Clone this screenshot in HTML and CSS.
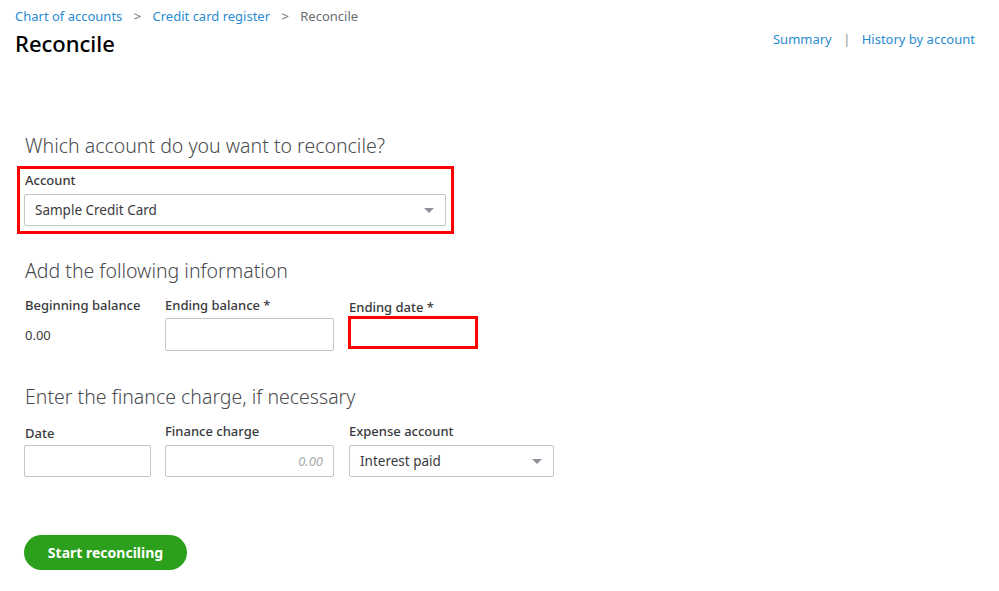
FILE: index.html
```html
<!DOCTYPE html>
<html lang="en">
  <head>
    <meta charset="UTF-8" />
    <title>Reconcile</title>
    <link rel="stylesheet" href="styles.css">
  </head>
  <body>
    <div class="page-header">
      <div class="header-left">
        <div class="breadcrumb">
          <a href="#">Chart of accounts</a>
          <span class="sep">&gt;</span>
          <a href="#">Credit card register</a>
          <span class="sep">&gt;</span>
          <span class="current">Reconcile</span>
        </div>
        <h1>Reconcile</h1>
      </div>
      <div class="header-links">
        <a href="#">Summary</a>
        <span class="bar">|</span>
        <a href="#">History by account</a>
      </div>
    </div>

    <div class="form">
      <h2>Which account do you want to reconcile?</h2>
      <div class="highlight account-box">
        <label class="field-label">Account</label>
        <div class="select wide">
          <span>Sample Credit Card</span>
          <span class="caret"></span>
        </div>
      </div>

      <h2 class="section">Add the following information</h2>
      <div class="row">
        <div class="col col-1">
          <label class="field-label">Beginning balance</label>
          <div class="static-value">0.00</div>
        </div>
        <div class="col col-2">
          <label class="field-label">Ending balance *</label>
          <div class="input"></div>
        </div>
        <div class="col col-3 ending-date">
          <label class="field-label">Ending date *</label>
          <div class="input highlight-input"></div>
        </div>
      </div>

      <h2 class="section finance">Enter the finance charge, if necessary</h2>
      <div class="row">
        <div class="col col-1">
          <label class="field-label low">Date</label>
          <div class="input date-input"></div>
        </div>
        <div class="col col-2">
          <label class="field-label">Finance charge</label>
          <div class="input amount"><span>0.00</span></div>
        </div>
        <div class="col col-3">
          <label class="field-label">Expense account</label>
          <div class="select expense">
            <span>Interest paid</span>
            <span class="caret"></span>
          </div>
        </div>
      </div>

      <button class="btn-primary">Start reconciling</button>
    </div>
  </body>
</html>
```

FILE: styles.css
```css
body {
  margin: 0;
  font-family: "Noto Sans", "Open Sans", sans-serif;
  color: #393a3d;
  background: #fff;
}

a {
  color: #2a8bd2;
  text-decoration: none;
}

.page-header {
  display: flex;
  justify-content: space-between;
  padding: 0 24px 0 15px;
}

.breadcrumb {
  margin-top: 7px;
  font-size: 13px;
  line-height: 18px;
}

.breadcrumb .sep {
  color: #6b6c72;
  margin: 0 8px;
}

.breadcrumb .current {
  color: #6b6c72;
}

h1 {
  margin: 3px 0 0;
  font-size: 22px;
  font-weight: 500;
  line-height: 30px;
  color: #000;
}

.header-links {
  margin-top: 30px;
  font-size: 13px;
  line-height: 18px;
}

.header-links .bar {
  color: #8d9096;
  margin: 0 8px;
}

.form {
  padding: 0 25px;
  margin-top: 75px;
}

h2 {
  margin: 0;
  font-size: 19.5px;
  font-weight: 300;
  line-height: 26px;
  color: #4a4b4f;
}

.highlight {
  border: 3px solid #f00;
}

.account-box {
  width: 422px;
  margin: 7px 0 0 -8px;
  padding: 2px 5px 5px 4px;
}

.field-label {
  display: block;
  font-size: 13px;
  line-height: 18px;
  font-weight: 500;
  color: #393a3d;
}

.account-box .field-label {
  margin-left: 1px;
  margin-bottom: 5px;
}

.select {
  display: flex;
  align-items: center;
  justify-content: space-between;
  box-sizing: border-box;
  height: 32px;
  border: 1px solid #c4c4c4;
  border-radius: 2px;
  padding: 0 10px;
  font-size: 13.5px;
  color: #393a3d;
}

.select.wide {
  width: 422px;
}

.caret {
  width: 0;
  height: 0;
  border-left: 5px solid transparent;
  border-right: 5px solid transparent;
  border-top: 5px solid #8d9096;
  margin-right: 1px;
}

.section {
  margin-top: 24px;
}

.row {
  display: flex;
  gap: 15px;
  margin-top: 12px;
}

.col-1 {
  width: 125px;
}

.col-2 {
  width: 169px;
}

.col-3 {
  width: 205px;
}

.static-value {
  margin-top: 12px;
  font-size: 13px;
  color: #393a3d;
}

.input {
  box-sizing: border-box;
  height: 33px;
  margin-top: 4px;
  border: 1px solid #c4c4c4;
  border-radius: 2px;
}

.ending-date .field-label {
  margin-top: 2px;
}

.ending-date .highlight-input {
  width: 130px;
  height: 33px;
  margin-top: 0;
  margin-left: -1px;
  border: 3px solid #f00;
  border-radius: 0;
}

.finance {
  margin-top: 33px;
}

.low {
  margin-top: 2px;
}

.date-input {
  margin-top: 3px;
  margin-left: -1px;
  width: 127px;
  height: 32px;
}

.amount {
  height: 32px;
  margin-top: 5px;
  display: flex;
  align-items: center;
  justify-content: flex-end;
  padding-right: 10px;
  font-size: 13px;
  font-style: italic;
  color: #a9abaf;
}

.expense {
  margin-top: 5px;
}

.btn-primary {
  display: block;
  margin-top: 58px;
  margin-left: -1px;
  width: 163px;
  height: 35px;
  border: none;
  border-radius: 18px;
  background: #2ca01c;
  color: #fff;
  font-family: inherit;
  font-size: 14px;
  font-weight: 700;
}
```
